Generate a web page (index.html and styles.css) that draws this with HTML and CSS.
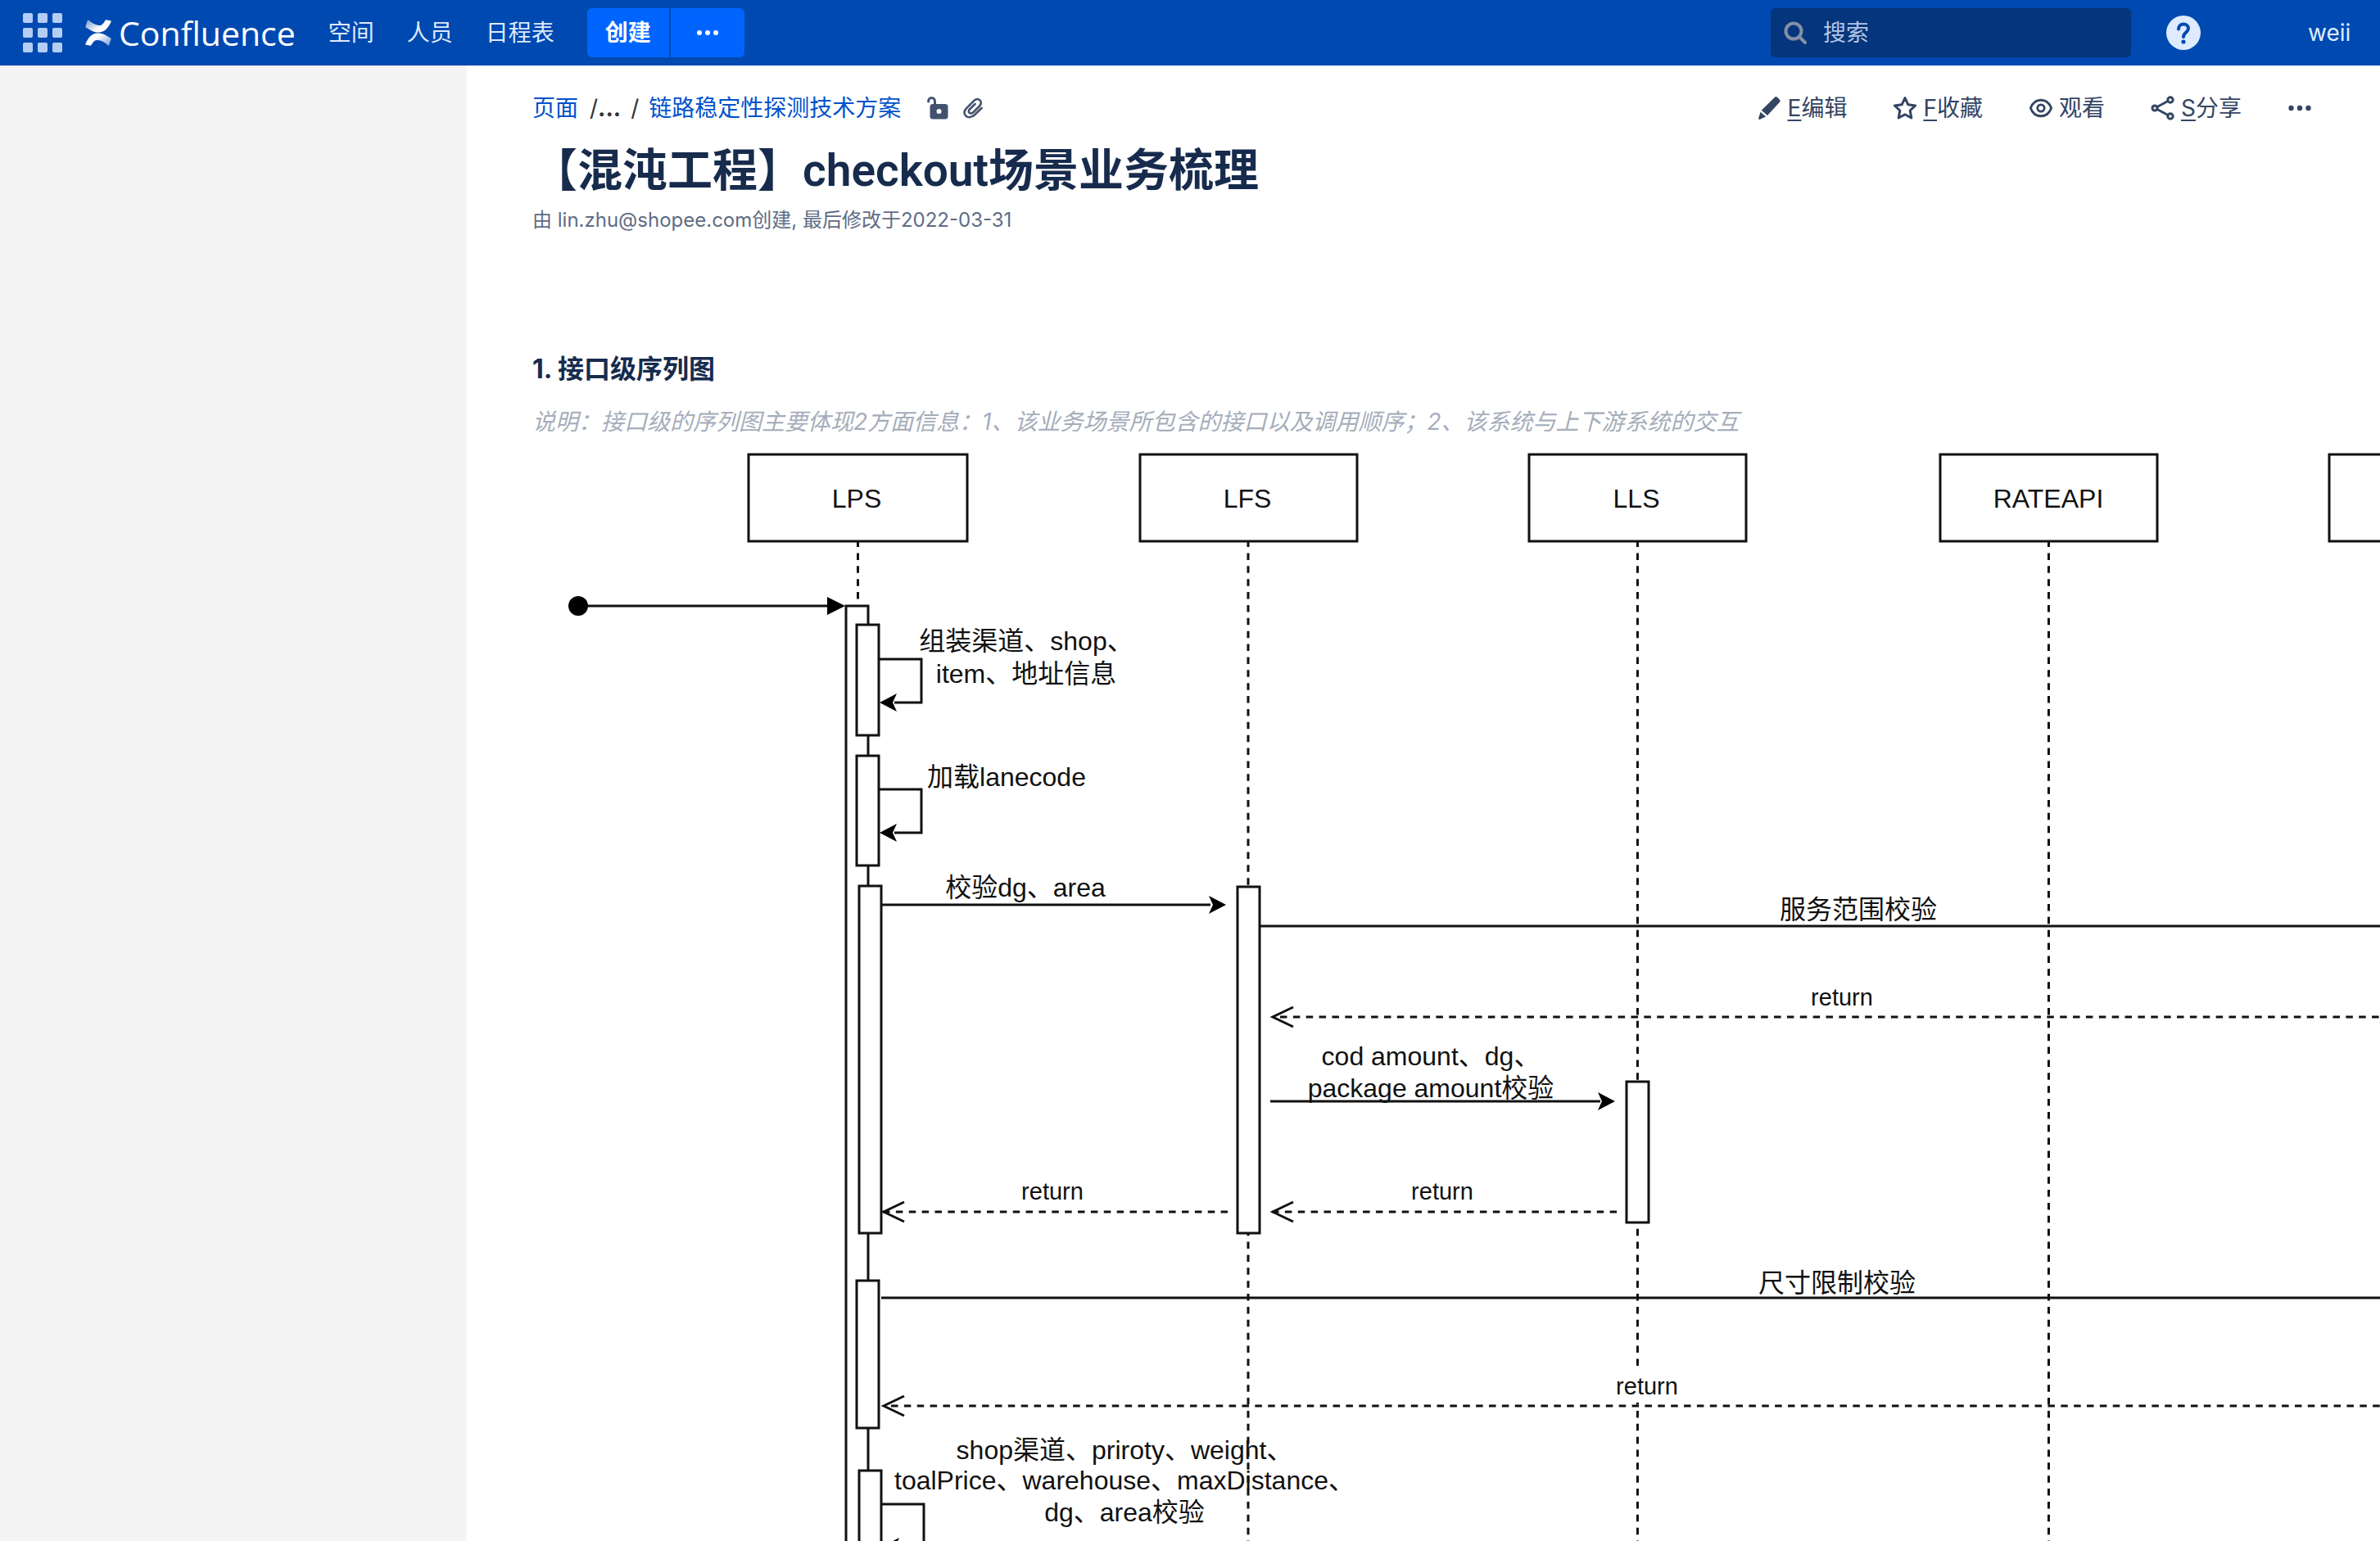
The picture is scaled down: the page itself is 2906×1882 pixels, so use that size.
FILE: index.html
```html
<!DOCTYPE html>
<html lang="zh-CN">
<head>
<meta charset="utf-8">
<title>【混沌工程】checkout场景业务梳理 - Confluence</title>
<link rel="stylesheet" href="styles.css">
</head>
<body>
<header class="topbar">
  <button class="apps" aria-label="应用">
    <svg width="48" height="48" viewBox="0 0 48 48" fill="#b3cdf5"><rect width="12" height="12" rx="2"/><rect x="18" width="12" height="12" rx="2"/><rect x="36" width="12" height="12" rx="2"/><rect y="18" width="12" height="12" rx="2"/><rect x="18" y="18" width="12" height="12" rx="2"/><rect x="36" y="18" width="12" height="12" rx="2"/><rect y="36" width="12" height="12" rx="2"/><rect x="18" y="36" width="12" height="12" rx="2"/><rect x="36" y="36" width="12" height="12" rx="2"/></svg>
  </button>
  <a class="logo" href="#">
    <svg width="32" height="32" viewBox="0 0 32 32">
      <defs>
        <linearGradient id="wave-top" x1="0" y1="0" x2="1" y2="0.6"><stop offset="0" stop-color="#fff" stop-opacity=".45"/><stop offset=".7" stop-color="#fff"/></linearGradient>
        <linearGradient id="wave-bottom" x1="1" y1="1" x2="0" y2="0.4"><stop offset="0" stop-color="#fff" stop-opacity=".45"/><stop offset=".7" stop-color="#fff"/></linearGradient>
      </defs>
      <path fill="url(#wave-top)" d="M4 .6Q3.200 0 2.800 1L.4 8.200Q.2 9 1 9.500C8 14 12 16 18 15.400C25 14.500 28.500 9 31.600 2.500Q32 1.600 31.200 1.200L25.600.3Q24.800.2 24.400 1C22 5.500 20 7.200 17 7C12 6.700 8.500 4.500 4 .6Z"/>
      <path fill="url(#wave-bottom)" d="M28 31.400Q28.800 32 29.200 31L31.600 23.800Q31.800 23 31 22.500C24 18 20 16 14 16.600C7 17.500 3.500 23 .4 29.500Q0 30.400.8 30.800L6.400 31.700Q7.200 31.800 7.600 31C10 26.500 12 24.800 15 25C20 25.300 23.500 27.500 28 31.400Z"/>
    </svg>
    <span class="logo-name">Confluence</span>
  </a>
  <nav class="nav">
    <a href="#">空间</a>
    <a href="#">人员</a>
    <a href="#">日程表</a>
  </nav>
  <div class="create">
    <button class="create-main">创建</button>
    <button class="create-more" aria-label="更多创建选项">
      <svg width="28" height="8" viewBox="0 0 28 8" fill="#fff"><circle cx="4" cy="4" r="3"/><circle cx="14" cy="4" r="3"/><circle cx="24" cy="4" r="3"/></svg>
    </button>
  </div>
  <label class="search">
    <svg width="28" height="28" viewBox="0 0 28 28" fill="none" stroke="#8590a5" stroke-width="4" stroke-linecap="round"><circle cx="12" cy="12" r="9.500"/><path d="M19 19L26 26"/></svg>
    <input type="text" placeholder="搜索" aria-label="搜索">
  </label>
  <button class="help" aria-label="帮助">
    <svg width="42" height="42" viewBox="0 0 42 42"><circle cx="21" cy="21" r="21" fill="#deebff"/><path d="M15 16.500C15 8.500 27 8.500 27 15.800C27 20.500 21 20.500 21 26" fill="none" stroke="#0049b0" stroke-width="4" stroke-linecap="round"/><circle cx="21" cy="32" r="2.600" fill="#0049b0"/></svg>
  </button>
  <a class="user" href="#">weii</a>
</header>

<div class="body">
  <aside class="sidebar"></aside>
  <main class="content">
    <div class="page-bar">
      <nav class="crumbs">
        <a href="#">页面</a>
        <span class="crumb-gap">/<b>...</b></span>
        <span>/</span>
        <a href="#">链路稳定性探测技术方案</a>
        <svg class="lock" width="26" height="28" viewBox="0 0 26 28"><path d="M1.600 6C1.600 0 9.500 0 9.500 6V11" fill="none" stroke="#42526e" stroke-width="3" stroke-linecap="round"/><path fill="#42526e" fill-rule="evenodd" d="M7 9H22Q25.500 9 25.500 12.500V24Q25.500 27.500 22 27.500H7Q3.500 27.500 3.500 24V12.500Q3.500 9 7 9ZM14.500 15A3 3 0 1 0 14.500 21A3 3 0 1 0 14.500 15Z"/></svg>
        <svg width="24" height="26" viewBox="0 0 24 26" fill="none" stroke="#42526e" stroke-width="2.600" stroke-linecap="round"><path d="M22.500 13L14 21.200C6 28.500-2.500 20.500 3.500 13.800L13 4.200C18.500-1.300 25 5.500 20 10.500L12.500 18C8.500 21.500 4.800 17.800 8 14.500L14.500 8"/></svg>
      </nav>
      <div class="actions">
        <button>
          <svg width="32" height="32" viewBox="0 0 32 32" fill="#344563"><path d="M22 2.800Q23.500 1.300 25 2.800L28 5.800Q29.500 7.300 28 8.800L13 25L5.800 18.800ZM4.600 20.800L11.200 26.600L4 29.800Q1.800 30.400 2.200 28.200Z"/></svg>
          <span><u>E</u>编辑</span>
        </button>
        <button>
          <svg width="32" height="32" viewBox="0 0 32 32" fill="none" stroke="#344563" stroke-width="3" stroke-linejoin="round"><path d="M16 3.500L19.800 11.800L28.600 12.900L22.200 19L23.800 28L16 23.700L8.200 28L9.800 19L3.400 12.900L12.200 11.800Z"/></svg>
          <span><u>F</u>收藏</span>
        </button>
        <button>
          <svg width="32" height="32" viewBox="0 0 32 32" fill="none" stroke="#344563" stroke-width="2.800"><path d="M3.400 16C8 3 24 3 28.600 16C24 29 8 29 3.400 16Z"/><circle cx="16" cy="16" r="4.200"/></svg>
          <span>观看</span>
        </button>
        <button>
          <svg width="32" height="32" viewBox="0 0 32 32" fill="none" stroke="#344563" stroke-width="3"><circle cx="6" cy="16" r="3"/><circle cx="25" cy="6" r="3.200"/><circle cx="25" cy="26" r="3.200"/><path d="M9 14.500L22 7.500M9 17.500L22 24.500"/></svg>
          <span><u>S</u>分享</span>
        </button>
        <button aria-label="更多">
          <svg width="32" height="32" viewBox="0 0 32 32" fill="#344563"><circle cx="5.500" cy="16" r="3.200"/><circle cx="16" cy="16" r="3.200"/><circle cx="26.500" cy="16" r="3.200"/></svg>
        </button>
      </div>
    </div>
    <h1>【混沌工程】checkout场景业务梳理</h1>
    <p class="meta">由 <a href="#">lin.zhu@shopee.com</a>创建, 最后修改于<a href="#">2022-03-31</a></p>

    <h2>1. 接口级序列图</h2>
    <p class="note">说明：接口级的序列图主要体现2方面信息：1、该业务场景所包含的接口以及调用顺序；2、该系统与上下游系统的交互</p>

    <svg class="diagram" width="2256" height="1334" viewBox="650 548 2256 1334" role="img" aria-label="接口级序列图">
      <defs>
        <path id="solid-head" d="M0 0L-21 -11L-16 0L-21 11Z"/>
        <path id="open-head" d="M25 -12L0 0L25 12" fill="none"/>
      </defs>

      <!-- lifelines -->
      <g class="dash">
        <path d="M1047.500 659.600V735"/>
        <path d="M1524 659.600V1882"/>
        <path d="M1999.500 659.600V1882"/>
        <path d="M2501.500 659.600V1882"/>
      </g>

      <!-- participants -->
      <g class="box">
        <rect x="914" y="555" width="267" height="106"/>
        <rect x="1392" y="555" width="265" height="106"/>
        <rect x="1867" y="555" width="265" height="106"/>
        <rect x="2369" y="555" width="265" height="106"/>
        <rect x="2844" y="555" width="265" height="106"/>
      </g>

      <!-- activations -->
      <g class="box">
        <rect x="1033" y="740" width="27" height="1300"/>
        <rect x="1046" y="763" width="27" height="135"/>
        <rect x="1046" y="923" width="27" height="134"/>
        <rect x="1049" y="1082" width="27" height="424"/>
        <rect x="1046" y="1564" width="27" height="180"/>
        <rect x="1049" y="1796" width="27" height="200"/>
        <rect x="1511" y="1083" width="27" height="423"/>
        <rect x="1986" y="1321" width="27" height="172"/>
      </g>

      <!-- solid messages -->
      <g class="line">
        <path d="M706 740H1012M1074 805H1125V858H1092M1074 964H1125V1017H1092M1077 1837H1128V1889H1094M1077 1105H1478M1538 1131H2906M1551 1345H1954M1076 1585H2906"/>
      </g>
      <circle cx="706" cy="740" r="12"/>
      <path d="M1010 729L1032 740L1010 751Z"/>
      <use href="#solid-head" x="1497" y="1105"/>
      <use href="#solid-head" x="1972" y="1345"/>
      <path d="M1074 858L1095 847L1090 858L1095 869ZM1074 1017L1095 1006L1090 1017L1095 1028ZM1077 1889L1098 1878L1093 1889L1098 1900Z"/>

      <!-- return messages -->
      <g class="dash">
        <path d="M1563 1242H2906M1078 1480H1499M1553 1480H1975M1088 1717H2906"/>
      </g>
      <g class="heads">
        <use href="#open-head" x="1554" y="1242"/>
        <use href="#open-head" x="1079" y="1480"/>
        <use href="#open-head" x="1554" y="1480"/>
        <use href="#open-head" x="1079" y="1717"/>
      </g>
      <rect x="1972" y="1675" width="80" height="38" fill="#fff"/>

      <g class="label">
        <text x="1046" y="620">LPS</text>
        <text x="1523" y="620">LFS</text>
        <text x="1998" y="620">LLS</text>
        <text x="2501" y="620">RATEAPI</text>
        <text x="1253" y="794">组装渠道、shop、</text>
        <text x="1253" y="834">item、地址信息</text>
        <text x="1229" y="960">加载lanecode</text>
        <text x="1252" y="1095">校验dg、area</text>
        <text x="2269" y="1122">服务范围校验</text>
        <text x="1747" y="1301">cod amount、dg、</text>
        <text x="1747" y="1340">package amount校验</text>
        <text x="2243" y="1578">尺寸限制校验</text>
        <text x="1373" y="1782">shop渠道、priroty、weight、</text>
        <text x="1373" y="1819">toalPrice、warehouse、maxDistance、</text>
        <text x="1373" y="1858">dg、area校验</text>
      </g>
      <g class="label label-return">
        <text x="2249" y="1228">return</text>
        <text x="1285" y="1465">return</text>
        <text x="1761" y="1465">return</text>
        <text x="2011" y="1703">return</text>
      </g>
    </svg>
  </main>
</div>
</body>
</html>
```
FILE: styles.css
```css
* {
  box-sizing: border-box;
}

body {
  margin: 0;
  background: #fff;
  color: #172b4d;
  font-family: Inter, "Noto Sans CJK SC", sans-serif;
  font-size: 28px;
  line-height: 40px;
}

a {
  color: #0052cc;
  text-decoration: none;
}

button {
  border: 0;
  padding: 0;
  background: none;
  color: inherit;
  font: inherit;
}

svg {
  display: block;
  flex: none;
}

h1,
h2,
p {
  margin: 0;
}

/* Top bar */
.topbar {
  display: flex;
  align-items: center;
  height: 80px;
  padding: 0 36px 0 28px;
  background: #0049b0;
}

.logo {
  display: flex;
  align-items: center;
  gap: 9px;
  margin-left: 28px;
}

.logo-name {
  color: #fff;
  font-family: "Open Sans", sans-serif;
  font-size: 41px;
}

.nav {
  display: flex;
  gap: 40px;
  margin-left: 40px;
}

.nav a {
  color: #deebff;
}

.create {
  display: flex;
  gap: 2px;
  margin-left: 40px;
}

.create button {
  display: flex;
  align-items: center;
  justify-content: center;
  height: 60px;
  background: #0065ff;
  color: #fff;
  font-weight: 700;
}

.create .create-main {
  width: 100px;
  border-radius: 6px 0 0 6px;
}

.create .create-more {
  width: 90px;
  border-radius: 0 6px 6px 0;
}

.search {
  display: flex;
  align-items: center;
  gap: 20px;
  width: 440px;
  height: 60px;
  margin-left: auto;
  padding: 0 16px;
  border-radius: 6px;
  background: #05357c;
}

.search input {
  flex: 1;
  min-width: 0;
  border: 0;
  padding: 0;
  background: none;
  color: #deebff;
  font: inherit;
}

.search input::placeholder {
  color: #b2c5e3;
  opacity: 1;
}

.help {
  margin-left: 43px;
}

.user {
  width: 52px;
  margin-left: 131px;
  color: #deebff;
}

/* Page */
.body {
  display: flex;
}

.sidebar {
  flex: none;
  width: 570px;
  background: #f4f4f4;
}

.content {
  flex: 1;
  min-width: 0;
  padding: 32px 0 0 80px;
  overflow: hidden;
}

.page-bar {
  display: flex;
  justify-content: space-between;
  padding-right: 82px;
}

.crumbs {
  display: flex;
  align-items: center;
  gap: 12px;
  color: #333;
}

.crumb-gap {
  padding-left: 2px;
}

.lock {
  margin: 0 6px 0 20px;
}

.actions {
  display: flex;
  gap: 55px;
  color: #344563;
}

.actions button {
  display: flex;
  align-items: center;
  gap: 6px;
}

.actions u {
  text-underline-offset: 4px;
}

h1 {
  margin-top: 24px;
  font-family: Roboto, "Noto Sans CJK SC", sans-serif;
  font-size: 55px;
  font-weight: 600;
  line-height: 64px;
}

.meta {
  margin-top: 13px;
  color: #5e6c84;
  font-size: 24px;
  line-height: 32px;
}

.meta a {
  color: inherit;
}

h2 {
  margin-top: 146px;
  font-size: 32px;
  font-weight: 700;
  line-height: 40px;
}

.note {
  margin-top: 24px;
  color: #a5adba;
  font-style: italic;
  white-space: nowrap;
}

/* Sequence diagram */
.diagram {
  margin-top: 13px;
}

.box {
  fill: #fff;
  stroke: #111;
  stroke-width: 3;
}

.line,
.heads {
  fill: none;
  stroke: #111;
  stroke-width: 3;
}

.dash {
  fill: none;
  stroke: #111;
  stroke-width: 3;
  stroke-dasharray: 8.5 7.370;
}

.label {
  fill: #111;
  font-family: "Liberation Sans", "Noto Sans CJK SC", sans-serif;
  font-size: 32px;
  text-anchor: middle;
}

.label-return {
  font-size: 29px;
}
```
